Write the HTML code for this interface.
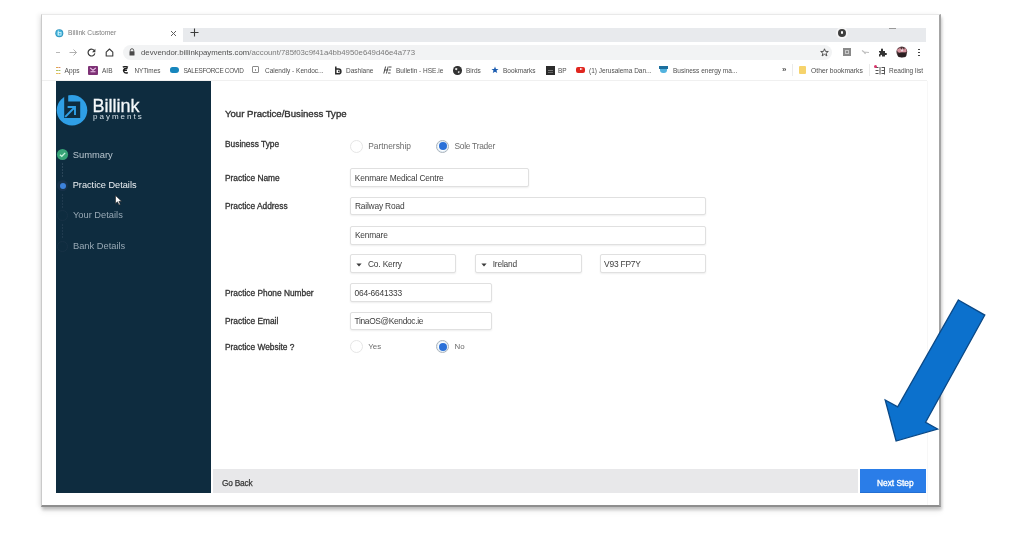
<!DOCTYPE html>
<html><head><meta charset="utf-8">
<style>
*{margin:0;padding:0;box-sizing:border-box}
html,body{width:1024px;height:550px;overflow:hidden;background:#fff;font-family:"Liberation Sans",sans-serif}
.a{position:absolute;white-space:nowrap}
#win{position:absolute;left:41px;top:13.5px;width:900px;height:493.5px;background:#fff;
 border-top:1px solid #e9e9e9;border-left:1.2px solid #cacaca;border-right:2px solid #a4a4a4;border-bottom:2.5px solid #8e8e8e;
 box-shadow:-3px 0 4px rgba(0,0,0,.06),1px 3px 3px rgba(0,0,0,.20),0 5px 6px rgba(0,0,0,.06)}
.ui{color:#5f6368;font-size:6px}
.lbl{color:#333;font-size:8.35px;line-height:10px;-webkit-text-stroke:0.3px #333}
.inp{position:absolute;border:1px solid #e0e0e0;border-radius:2px;background:#fff;box-shadow:0 1px 2px rgba(0,0,0,.07)}
.val{position:absolute;color:#3c3c3c;font-size:8.4px;line-height:10px;white-space:nowrap;letter-spacing:-0.18px}
.radio{position:absolute;width:13px;height:13px;border-radius:50%;border:1px solid #e6e6e6;background:#fff}
.radio.on{border-color:#aab3bc;box-shadow:inset 0 0 0 1px #e4f0f8}
.radio.on::after{content:"";position:absolute;left:1.5px;top:1.5px;width:8px;height:8px;border-radius:50%;background:#2a70d8}
.bk{position:absolute;top:67px;font-size:6.5px;color:#4e4e4e;white-space:nowrap}
.hd{color:#333;font-size:9.6px;line-height:10px;-webkit-text-stroke:0.35px #333}
.rt{position:absolute;color:#6c6c6c;font-size:8.4px;line-height:10px;white-space:nowrap}
#root{position:absolute;left:0;top:0;width:1024px;height:550px;filter:blur(0.35px)}
</style></head><body><div id="root">
<div id="win"></div>

<!-- tab strip -->
<div class="a" style="left:183px;top:28px;width:743px;height:13.5px;background:#e8eaed"></div>
<div class="a" style="left:836px;top:26.5px;width:12px;height:12px;border-radius:50%;background:#f6f6f7"></div>
<div class="a" style="left:838px;top:28.5px;width:8px;height:8px;border-radius:50%;background:#3e3e3e"></div>
<div class="a" style="left:840.7px;top:31.2px;width:2.6px;height:2.6px;border-radius:50%;background:#fff"></div>
<div class="a" style="left:889px;top:28px;width:7px;height:1px;background:#9a9a9a"></div>
<!-- favicon -->
<svg class="a" style="left:55px;top:28.5px" width="9" height="9" viewBox="0 0 9 9"><circle cx="4.3" cy="4.2" r="4" fill="#2f95bf"/><circle cx="4.3" cy="4.2" r="3.1" fill="#45b4dc"/><rect x="2.8" y="1.6" width="1" height="4.6" fill="#c8f0fb"/><rect x="3.2" y="3.5" width="2.8" height="2.5" fill="none" stroke="#c8f0fb" stroke-width="0.9"/></svg>
<div class="a" style="left:68px;top:28.8px;font-size:6.7px;color:#7c7c7c">Billink Customer</div>
<svg class="a" style="left:170px;top:30px" width="7" height="7" viewBox="0 0 7 7"><path d="M1 1L6 6M6 1L1 6" stroke="#606060" stroke-width="1"/></svg>
<svg class="a" style="left:190px;top:28px" width="9" height="9" viewBox="0 0 9 9"><path d="M4.5 0.5V8.5M0.5 4.5H8.5" stroke="#3c3c3c" stroke-width="1.1"/></svg>

<!-- nav buttons -->
<div class="a" style="left:55.5px;top:51.8px;width:4px;height:1px;background:#b8b8b8"></div>
<svg class="a" style="left:69px;top:48px" width="9" height="9" viewBox="0 0 9 9"><path d="M0.5 4.5H7.5M4.5 1.5L7.5 4.5L4.5 7.5" stroke="#a8a8a8" stroke-width="0.9" fill="none"/></svg>
<svg class="a" style="left:87px;top:48px" width="9" height="9" viewBox="0 0 9 9"><path d="M7.6 3.2A3.4 3.4 0 1 0 7.8 5.4" stroke="#3a3a3a" stroke-width="1.2" fill="none"/><path d="M8.4 0.8V4.2H5Z" fill="#3a3a3a"/></svg>
<svg class="a" style="left:105px;top:48px" width="9" height="9" viewBox="0 0 9 9"><path d="M1.2 4.2L4.5 1L7.8 4.2V8H1.2Z" stroke="#3a3a3a" stroke-width="1.1" fill="none" stroke-linejoin="round"/></svg>

<!-- omnibox -->
<div class="a" style="left:123px;top:44.6px;width:709px;height:15px;border-radius:8px;background:#f2f3f4"></div>
<svg class="a" style="left:129px;top:48px" width="6" height="8" viewBox="0 0 6 8"><path d="M1.3 3.5V2.4A1.7 1.7 0 0 1 4.7 2.4V3.5" stroke="#4a4a4a" stroke-width="0.9" fill="none"/><rect x="0.5" y="3.3" width="5" height="4.2" rx="0.5" fill="#4a4a4a"/></svg>
<div class="a" style="left:141px;top:47.7px;font-size:7.8px;color:#505050">devvendor.billinkpayments.com<span style="color:#7a7a7a">/account/785f03c9f41a4bb4950e649d46e4a773</span></div>
<svg class="a" style="left:820px;top:48px" width="9" height="9" viewBox="0 0 9 9"><path d="M4.5 0.8L5.5 3.4L8.3 3.5L6.1 5.2L6.9 7.9L4.5 6.3L2.1 7.9L2.9 5.2L0.7 3.5L3.5 3.4Z" stroke="#444" stroke-width="0.9" fill="none" stroke-linejoin="round"/></svg>
<div class="a" style="left:843px;top:48px;width:8px;height:8px;background:#8a8a8a"></div>
<div class="a" style="left:845px;top:50px;width:4px;height:4px;border:0.8px solid #c8c8c8"></div>
<svg class="a" style="left:860.5px;top:49px" width="9" height="6" viewBox="0 0 9 6"><path d="M1 1.5L3 3L8 3.5M3 3L4.5 4.8" stroke="#bdbdbd" stroke-width="1.2" fill="none"/></svg>
<svg class="a" style="left:878px;top:48px" width="9" height="9" viewBox="0 0 9 9"><path d="M1 3H3V1.5A1 1 0 0 1 5 1.5V3H7V5H8A1 1 0 0 1 8 7H7V8.5H4V7.3A1 1 0 0 0 2.5 7.3V8.5H1V6.2A1 1 0 0 0 1 4.2Z" fill="#333"/></svg>
<svg class="a" style="left:895.5px;top:46.3px" width="12" height="12" viewBox="0 0 12 12"><circle cx="5.8" cy="5.8" r="5.4" fill="#4a3437"/><path d="M1 5Q1.5 1.5 3 3L4 1L5.5 4.5L6.5 1.5L8 4L9 1.5Q11 3 10.5 6L7 6.5L3 6.8Z" fill="#d7939f"/><path d="M4.5 3.5L6 6L7.5 3.5" fill="#f0e0e4"/><ellipse cx="6" cy="9" rx="4.5" ry="2.5" fill="#2a1f21"/></svg>
<div class="a" style="left:918.3px;top:48.5px;width:1.5px;height:1.5px;background:#444;box-shadow:0 3px 0 #444,0 6px 0 #444"></div>

<!-- bookmarks -->
<div class="a" style="left:56px;top:66.5px;width:1.6px;height:1.6px;background:#e0a848;box-shadow:2.4px 0 0 #d98c6a,0 3px 0 #b9c060,2.4px 3px 0 #9cc46a,0 6px 0 #e6c35c,2.4px 6px 0 #e3b050"></div>
<div class="bk" style="left:64.6px;font-size:6.6px">Apps</div>
<div class="a" style="left:88px;top:65.8px;width:9.5px;height:9px;border-radius:1px;background:#7e3276"></div>
<svg class="a" style="left:89px;top:66px" width="8" height="7" viewBox="0 0 8 7"><path d="M1.2 1.8L4 4.3L6.8 1.8M1.5 5.8H6.5" stroke="#f0c8ee" stroke-width="1.1" fill="none"/></svg>
<div class="bk" style="left:102px">AIB</div>
<svg class="a" style="left:122px;top:66.2px" width="7" height="8" viewBox="0 0 7 8"><path d="M0.8 1.2Q3 0 6 1.2M5.5 2.5Q2 1.8 1.5 4.5Q1.8 7.5 5.8 6.8M1.8 4.2H5" stroke="#1e1e1e" stroke-width="1.4" fill="none"/></svg>
<div class="bk" style="left:134.4px;font-size:6.4px">NYTimes</div>
<div class="a" style="left:170px;top:67.2px;width:9px;height:5.6px;border-radius:2.5px 3px 3px 2.5px;background:#1786bd"></div>
<div class="bk" style="left:183.4px;font-size:6.4px;letter-spacing:-0.3px">SALESFORCE COVID</div>
<div class="a" style="left:251.8px;top:66.2px;width:7px;height:7px;border:0.8px solid #8a8a8a;border-radius:1px"></div><div class="a" style="left:254.8px;top:68.5px;width:0.8px;height:2.5px;background:#999"></div>
<div class="bk" style="left:265px">Calendly - Kendoc...</div>
<svg class="a" style="left:334.5px;top:65.5px" width="7" height="9" viewBox="0 0 7 9"><path d="M0.8 0.5V8.5M0.8 3H3.5A2.4 2.4 0 0 1 3.5 7.8H0.8" stroke="#2a2a2a" stroke-width="1.5" fill="none"/><rect x="3" y="4.6" width="1.6" height="1.6" fill="#2a2a2a"/></svg>
<div class="bk" style="left:346px">Dashlane</div>
<svg class="a" style="left:382.5px;top:66px" width="9" height="8" viewBox="0 0 9 8"><path d="M2.6 0.5L0.8 7.5M5.2 0.5L3.4 7.5M1.5 4H4.6M6 1H8.5M5.6 4H7.8M5 7H7.5" stroke="#333" stroke-width="0.9" fill="none"/></svg>
<div class="bk" style="left:396px">Bulletin - HSE.ie</div>
<div class="a" style="left:453px;top:66px;width:8.5px;height:8.5px;border-radius:50%;background:#333"></div>
<svg class="a" style="left:453px;top:66px" width="9" height="9" viewBox="0 0 9 9"><path d="M2 2.5Q3.5 1.5 4.5 2.8L3.8 4.2L2.2 3.8ZM5 5.2L6.8 5.6L6 7.2L4.8 6.6Z" fill="#e8e8e8"/></svg>
<div class="bk" style="left:466px">Birds</div>
<svg class="a" style="left:490.5px;top:66px" width="8" height="8" viewBox="0 0 9 9"><path d="M4.5 0.5L5.6 3.3L8.5 3.4L6.2 5.2L7 8L4.5 6.4L2 8L2.8 5.2L0.5 3.4L3.4 3.3Z" fill="#1a5cb0"/></svg>
<div class="bk" style="left:503px">Bookmarks</div>
<div class="a" style="left:545.5px;top:65.5px;width:9px;height:9px;background:#2b2b2b"></div><div class="a" style="left:547.5px;top:69.5px;width:5px;height:1px;background:#777;box-shadow:0 2px 0 #666"></div>
<div class="bk" style="left:558px">BP</div>
<div class="a" style="left:576px;top:66.5px;width:9px;height:6.5px;border-radius:2px;background:#e0261f"></div>
<div class="a" style="left:579.5px;top:68.3px;width:0;height:0;border-left:3px solid #fff;border-top:1.5px solid transparent;border-bottom:1.5px solid transparent"></div>
<div class="bk" style="left:589px">(1) Jerusalema Dan...</div>
<div class="a" style="left:659px;top:65.5px;width:9px;height:3px;background:#1c6f9e"></div>
<div class="a" style="left:660px;top:69px;width:7px;height:3.5px;border-radius:0 0 3px 3px;background:#52b3df"></div>
<div class="bk" style="left:673px">Business energy ma...</div>
<div class="a" style="left:782px;top:64.5px;font-size:8px;font-weight:700;color:#555">&#187;</div>
<div class="a" style="left:791.5px;top:64px;width:1px;height:12px;background:#ebebeb"></div>
<div class="a" style="left:799px;top:66px;width:6.5px;height:8px;background:#f6d36c;border-radius:1px"></div>
<div class="bk" style="left:811px;font-size:6.75px">Other bookmarks</div>
<div class="a" style="left:869px;top:64px;width:1px;height:12px;background:#ebebeb"></div>
<svg class="a" style="left:874.5px;top:65.5px" width="10" height="9" viewBox="0 0 10 9"><path d="M0.5 1.5H3.5M0.5 4.5H3.5M0.5 7.5H3.5M5 1V8.5M6.5 1.5H9.5M6.5 4.5H9.5M6.5 7.5H9.5M9.5 1V8.5" stroke="#555" stroke-width="1" fill="none"/></svg>
<div class="a" style="left:874px;top:64.5px;width:3px;height:3px;border-radius:50%;background:#d9336a"></div>
<div class="bk" style="left:889px">Reading list</div>

<div class="a" style="left:42px;top:80.3px;width:885px;height:1px;background:#f0f0f0"></div><div class="a" style="left:927px;top:81px;width:1px;height:424px;background:#f7f7f7"></div>
<!-- sidebar -->
<div class="a" style="left:55.7px;top:81.2px;width:155.5px;height:411.4px;background:#0e2c3f"></div>
<svg class="a" style="left:55px;top:93px" width="34" height="34" viewBox="0 0 34 34">
<circle cx="17" cy="17.3" r="15.3" fill="#2f9fe6"/>
<path d="M9.2 1.5H13.2V8.5H25.2V25H9.2Z" fill="#0e2c3f"/>
<path d="M10.2 23.8L20 14M12.6 14H20V22" stroke="#2f9fe6" stroke-width="1.9" fill="none"/>
</svg>
<div class="a" style="left:92.5px;top:95.5px;font-size:18px;line-height:20px;color:#f4f8fa;font-weight:400;letter-spacing:0px;-webkit-text-stroke:0.3px #f4f8fa">Billink</div>
<div class="a" style="left:93px;top:112px;font-size:8px;line-height:9px;color:#d5e0e7;letter-spacing:2px">payments</div>

<svg class="a" style="left:56px;top:148px" width="14" height="14" viewBox="0 0 14 14"><circle cx="6.5" cy="6.5" r="5.6" fill="#37a477"/><path d="M3.9 6.8L5.8 8.3L9.2 4.9" stroke="#c9f6de" stroke-width="1.3" fill="none"/></svg>
<div class="a" style="left:62px;top:163px;width:1px;height:14px;background:repeating-linear-gradient(#2a4558 0 2px,transparent 2px 3px)"></div>
<div class="a" style="left:57px;top:180px;width:11px;height:11px;border-radius:50%;background:#18324a"></div>
<div class="a" style="left:59.5px;top:182.5px;width:6px;height:6px;border-radius:50%;background:#3d82db"></div>
<div class="a" style="left:62px;top:194px;width:1px;height:14px;background:repeating-linear-gradient(#1f3a4e 0 2px,transparent 2px 3px)"></div>
<div class="a" style="left:57px;top:210px;width:11px;height:11px;border-radius:50%;border:1px solid #173246"></div>
<div class="a" style="left:62px;top:224px;width:1px;height:14px;background:repeating-linear-gradient(#1f3a4e 0 2px,transparent 2px 3px)"></div>
<div class="a" style="left:57px;top:241px;width:11px;height:11px;border-radius:50%;border:1px solid #173246"></div>
<div class="a" style="left:72.7px;top:149.8px;line-height:10px;font-size:9.4px;color:#b9c6cf">Summary</div>
<div class="a" style="left:72.7px;top:180.2px;line-height:10px;font-size:9.2px;color:#eef2f5">Practice Details</div>
<div class="a" style="left:73px;top:210.3px;line-height:10px;font-size:9.3px;color:#97a8b4">Your Details</div>
<div class="a" style="left:73px;top:240.9px;line-height:10px;font-size:9.3px;color:#97a8b4">Bank Details</div>
<svg class="a" style="left:115.3px;top:195.3px" width="8" height="11" viewBox="0 0 8 11"><path d="M0.5 0.5V8.5L2.5 6.8L4 10L5.3 9.4L3.9 6.3H6.6Z" fill="#fff" stroke="#222" stroke-width="0.6"/></svg>

<!-- content -->
<div class="a hd" style="left:225px;top:108.5px;">Your Practice/Business Type</div>
<div class="a lbl" style="left:225px;top:139px;">Business Type</div>
<div class="a lbl" style="left:225px;top:172.9px;">Practice Name</div>
<div class="a lbl" style="left:225px;top:201.3px;">Practice Address</div>
<div class="a lbl" style="left:225px;top:287.8px;">Practice Phone Number</div>
<div class="a lbl" style="left:225px;top:316.4px;">Practice Email</div>
<div class="a lbl" style="left:225px;top:342px;">Practice Website ?</div>
<div class="radio" style="left:349.5px;top:139.5px"></div>
<div class="rt" style="left:368.2px;top:140.6px;">Partnership</div>
<div class="radio on" style="left:436.4px;top:139.7px"></div>
<div class="rt" style="left:454.4px;top:140.6px;;letter-spacing:-0.25px">Sole Trader</div>
<div class="radio" style="left:349.5px;top:340.2px"></div>
<div class="rt" style="left:368.3px;top:342.3px;font-size:7.9px">Yes</div>
<div class="radio on" style="left:436.4px;top:340.4px"></div>
<div class="rt" style="left:454.6px;top:342.3px;font-size:7.9px">No</div>
<div class="inp" style="left:350.4px;top:167.6px;width:178.39999999999998px;height:19.700000000000017px"></div>
<div class="val" style="left:354.8px;top:172.65px;">Kenmare Medical Centre</div>
<div class="inp" style="left:350.4px;top:196.6px;width:356.0px;height:18.900000000000006px"></div>
<div class="val" style="left:354.9px;top:201.45px;">Railway Road</div>
<div class="inp" style="left:350.4px;top:225.5px;width:356.0px;height:19.0px"></div>
<div class="val" style="left:354.9px;top:230.4px;">Kenmare</div>
<div class="inp" style="left:350.4px;top:253.9px;width:106.0px;height:19.49999999999997px"></div>
<svg class="a" style="left:356px;top:263px" width="6" height="4" viewBox="0 0 6 4"><path d="M0.4 0.6H5.6L3 3.4Z" fill="#3a3a3a"/></svg><div class="val" style="left:368px;top:259.25px;">Co. Kerry</div>
<div class="inp" style="left:474.8px;top:253.9px;width:107.40000000000003px;height:19.49999999999997px"></div>
<svg class="a" style="left:480.5px;top:263px" width="6" height="4" viewBox="0 0 6 4"><path d="M0.4 0.6H5.6L3 3.4Z" fill="#3a3a3a"/></svg><div class="val" style="left:492.7px;top:259.25px;">Ireland</div>
<div class="inp" style="left:599.6px;top:253.9px;width:106.79999999999995px;height:19.49999999999997px"></div>
<div class="val" style="left:604px;top:259.25px;">V93 FP7Y</div>
<div class="inp" style="left:350.4px;top:282.8px;width:141.60000000000002px;height:19.0px"></div>
<div class="val" style="left:354.5px;top:287.8px;">064-6641333</div>
<div class="inp" style="left:350.4px;top:311.7px;width:141.60000000000002px;height:18.5px"></div>
<div class="val" style="left:354.5px;top:316.25px;;letter-spacing:-0.33px">TinaOS@Kendoc.ie</div>

<!-- footer -->
<div class="a" style="left:213px;top:468.5px;width:645px;height:24px;background:#e8e8ea"></div>
<div class="a" style="left:222px;top:477.9px;line-height:10px;font-size:8.3px;color:#383838;-webkit-text-stroke:0.25px #383838;letter-spacing:-0.2px">Go Back</div>
<div class="a" style="left:860px;top:469px;width:66.3px;height:23.5px;background:#2a7de8;box-shadow:inset 0 -1px 0 #236fd2"></div>
<div class="a" style="left:877px;top:478px;line-height:10px;font-size:8.35px;color:#fff;-webkit-text-stroke:0.35px #fff">Next Step</div>

<!-- arrow -->
<svg class="a" style="left:0;top:0" width="1024" height="550">
<polygon points="958.4,300 984.8,315.1 925.6,422.2 937.6,429 896.1,441 885.2,400 897.7,406.9" fill="#0c71cd" stroke="#0a4886" stroke-width="1.3" stroke-linejoin="miter"/>
</svg>
</div></body></html>
